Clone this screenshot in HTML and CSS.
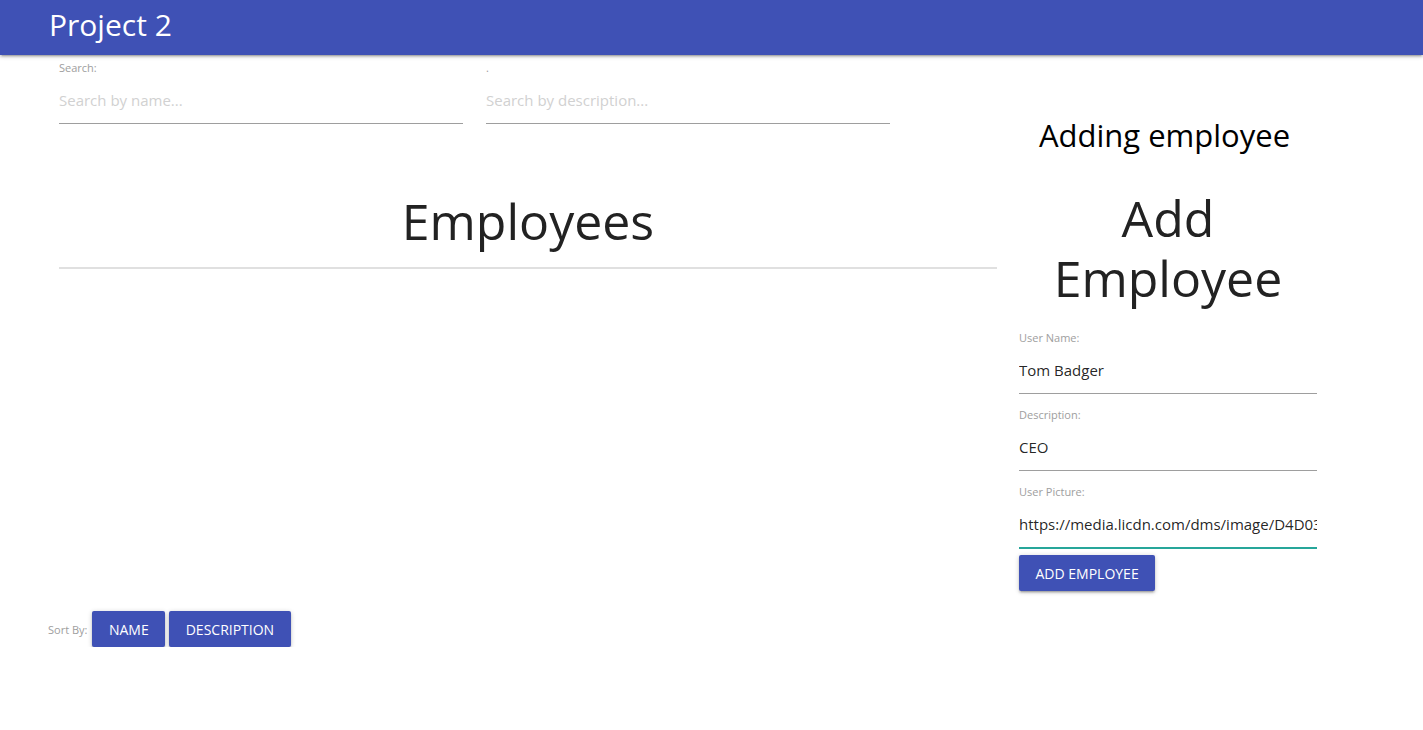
FILE: index.html
```html
<!DOCTYPE html>
<html lang="en">
<head>
<meta charset="utf-8">
<title>Project 2</title>
<link rel="stylesheet" href="styles.css">
</head>
<body>
<nav class="navbar">
  <span class="brand">Project 2</span>
</nav>
<main class="layout">
  <section class="left-col">
    <div class="left-inner">
      <div class="search-row">
        <div class="field search-field">
          <label class="field-label">Search:</label>
          <input class="field-input" type="text" placeholder="Search by name...">
        </div>
        <div class="field search-field">
          <label class="field-label">.</label>
          <input class="field-input" type="text" placeholder="Search by description...">
        </div>
      </div>
      <h2 class="list-title">Employees</h2>
      <hr class="divider">
      <div class="employee-list"></div>
    </div>
    <div class="sort-row">
      <span class="sort-label">Sort By:</span>
      <button class="btn">Name</button>
      <button class="btn">Description</button>
    </div>
  </section>
  <aside class="right-col">
    <h4 class="status">Adding employee</h4>
    <h2 class="form-title">Add Employee</h2>
    <form class="emp-form">
      <div class="field">
        <label class="field-label">User Name:</label>
        <input class="field-input" type="text" value="Tom Badger">
      </div>
      <div class="field">
        <label class="field-label">Description:</label>
        <input class="field-input" type="text" value="CEO">
      </div>
      <div class="field">
        <label class="field-label">User Picture:</label>
        <input class="field-input focused" type="text" value="https://media.licdn.com/dms/image/D4D03AQF">
      </div>
      <button class="btn" type="button">Add Employee</button>
    </form>
  </aside>
</main>
</body>
</html>
```

FILE: styles.css
```css
* { box-sizing: border-box; }

html, body {
  margin: 0;
  padding: 0;
  background: #fff;
  font-family: "Open Sans", "Noto Sans", sans-serif;
  color: rgba(0, 0, 0, 0.87);
}

.navbar {
  height: 55px;
  background: #3f51b5;
  display: flex;
  align-items: center;
  padding-left: 49px;
  box-shadow: 0 2px 2px 0 rgba(0,0,0,.14), 0 3px 1px -2px rgba(0,0,0,.12), 0 1px 5px 0 rgba(0,0,0,.2);
  position: relative;
  z-index: 1;
}

.brand {
  color: #fff;
  font-size: 30px;
  line-height: 1;
  margin-top: -6px;
}

.layout {
  display: flex;
  gap: 11px;
  padding-left: 48px;
}

.left-col {
  width: 960px;
  flex: none;
}

.left-inner {
  padding: 5px 11px 0;
}

.search-row {
  display: flex;
  gap: 23px;
}

.search-field {
  width: 404px;
}

.field {
  display: flex;
  flex-direction: column;
}

.field-label {
  font-size: 11px;
  line-height: 16px;
  color: #9e9e9e;
}

.field-input {
  height: 48px;
  border: none;
  border-bottom: 1px solid #9e9e9e;
  outline: none;
  padding: 0;
  margin: 0;
  font-family: inherit;
  font-size: 15px;
  color: rgba(0, 0, 0, 0.87);
  background: transparent;
}

.field-input::placeholder {
  color: #d1d1d1;
}

.field-input.focused {
  border-bottom: 1px solid #26a69a;
  box-shadow: 0 1px 0 0 #26a69a;
}

.list-title {
  margin: 62px 0 0;
  font-size: 50px;
  font-weight: 400;
  line-height: 70px;
  text-align: center;
  color: #222;
}

.divider {
  margin: 11px 0 0;
  border: none;
  border-top: 2px solid #e0e0e0;
}

.employee-list {
  height: 342px;
}

.sort-row {
  display: flex;
  align-items: center;
  gap: 4px;
}

.sort-label {
  font-size: 11px;
  color: #9e9e9e;
  margin-right: 1px;
}

.btn {
  height: 36px;
  padding: 0 16.5px;
  border: none;
  border-radius: 2px;
  background: #3f51b5;
  color: #fff;
  font-family: inherit;
  font-size: 14px;
  text-transform: uppercase;
  letter-spacing: 0;
  box-shadow: 0 2px 2px 0 rgba(0,0,0,.14), 0 3px 1px -2px rgba(0,0,0,.12), 0 1px 5px 0 rgba(0,0,0,.2);
  cursor: pointer;
}

.right-col {
  width: 298px;
  flex: none;
  text-align: center;
}

.status {
  margin: 60px 0 0;
  padding-right: 7px;
  font-size: 31px;
  font-weight: 400;
  line-height: 40px;
  color: #000;
}

.form-title {
  margin: 33px 0 0;
  font-size: 50px;
  font-weight: 400;
  line-height: 60px;
  color: #222;
}

.emp-form {
  margin-top: 22px;
  text-align: left;
}

.emp-form .field {
  margin-bottom: 13px;
}

.emp-form .field:last-of-type {
  margin-bottom: 7px;
}
```
